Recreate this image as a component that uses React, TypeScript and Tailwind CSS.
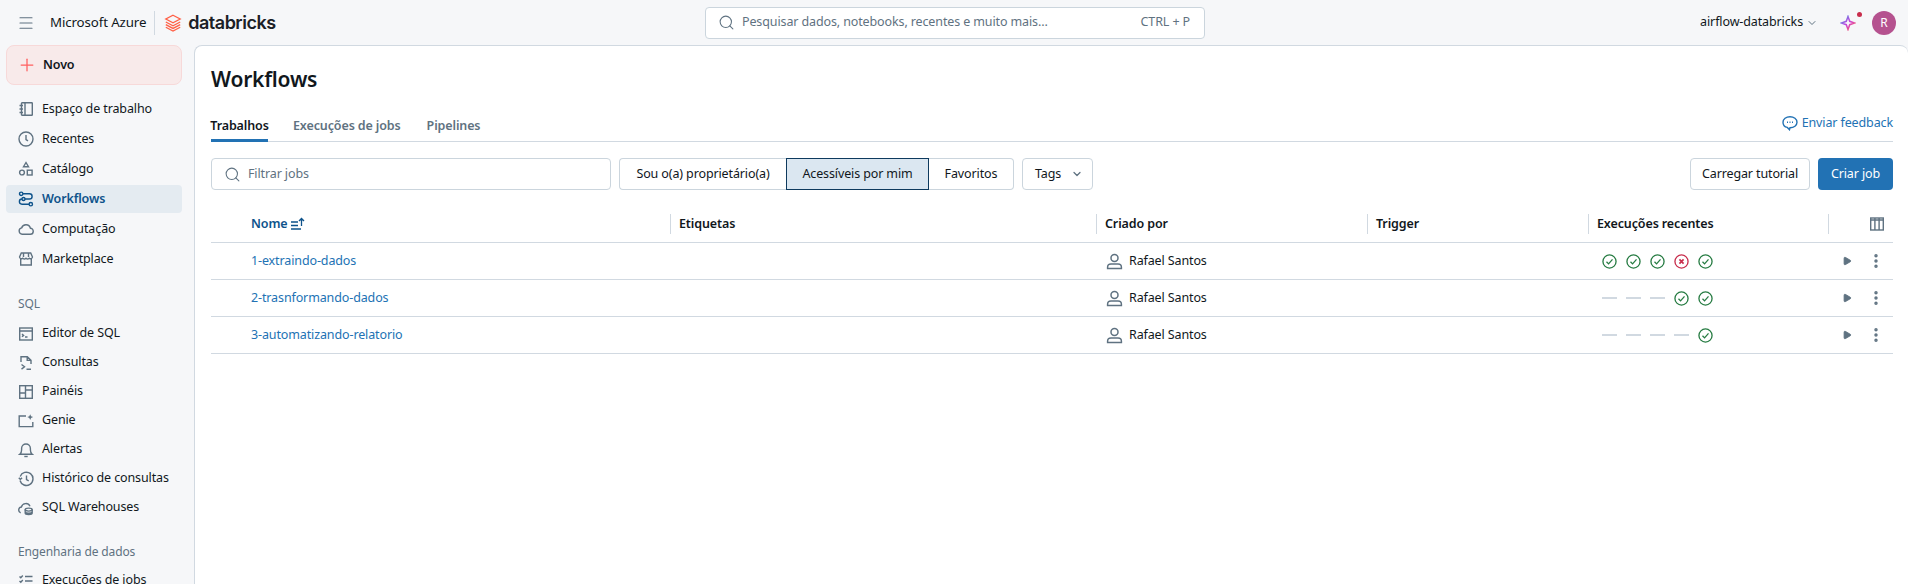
import { Search, ChevronDown, Plus, Menu, Play, EllipsisVertical } from 'lucide-react';
import type { ReactNode } from 'react';

const stroke = { fill: 'none', stroke: 'currentColor', strokeWidth: 1.4 };

function Ico({ children, className = '' }: { children: ReactNode; className?: string }) {
  return (
    <svg viewBox="0 0 16 16" className={`w-4 h-4 shrink-0 ${className}`} {...stroke}>
      {children}
    </svg>
  );
}

const WorkspaceIcon = () => (
  <Ico>
    <rect x="3.5" y="1.7" width="10.800" height="12.600" rx="0.600" />
    <path d="M7 2v12M1.500 4.500h3.500M1.500 8h3.500M1.500 11.500h3.500" />
  </Ico>
);
const ClockIcon = () => (
  <Ico>
    <circle cx="8" cy="8" r="7" />
    <path d="M8 4v4.500l2 1.300" />
  </Ico>
);
const CatalogIcon = () => (
  <Ico>
    <path d="M8 1.500l2.500 4.200h-5z" />
    <circle cx="4" cy="11.500" r="2.400" />
    <rect x="9.300" y="9.200" width="4.800" height="4.800" />
  </Ico>
);
const WorkflowIcon = () => (
  <Ico>
    <circle cx="3.200" cy="2.800" r="1.700" />
    <circle cx="12.800" cy="13.200" r="1.700" />
    <circle cx="5.500" cy="8" r="1.500" />
    <path d="M5 2.800h6.500a2.600 2.600 0 0 1 0 5.200H7M4 8a2.600 2.600 0 0 0 0 5.200h7" />
  </Ico>
);
const CloudIcon = () => (
  <Ico>
    <path d="M4.200 13.200a3.200 3.200 0 0 1-.6-6.300 4.600 4.600 0 0 1 8.800.3 3 3 0 0 1-.3 6z" />
  </Ico>
);
const MarketIcon = () => (
  <Ico>
    <path d="M3.300 2h9.400l1.800 4a2 2 0 0 1-3.300 1.200 2.400 2.400 0 0 1-3.200 0 2.400 2.400 0 0 1-3.200 0A2 2 0 0 1 1.500 6z" />
    <path d="M2.700 8v6h10.600V8M5.500 2v4M10.500 2v4" />
  </Ico>
);
const EditorIcon = () => (
  <Ico>
    <rect x="1.700" y="2" width="12.600" height="12" />
    <path d="M1.700 5h12.600M4 8l1.600 1.400L4 10.800M7 11h2.500" />
  </Ico>
);
const QueryIcon = () => (
  <Ico>
    <path d="M3 7V1.700h6.300L13 5.400V9M9.200 1.700v3.700H13" />
    <path d="M3.500 9.500l3 2.300-3 2.300M8.500 14.300h4.500" />
  </Ico>
);
const PanelsIcon = () => (
  <Ico>
    <rect x="1.700" y="1.700" width="12.600" height="12.600" />
    <path d="M7.500 1.700v12.600M1.700 9h5.800M7.500 6h6.800" />
  </Ico>
);
const GenieIcon = () => (
  <Ico>
    <path d="M8 3H1.200v10.600h13.600V9" />
    <path d="M12.200 1.200l.9 2 2 .9-2 .9-.9 2-.9-2-2-.9 2-.9z" fill="currentColor" stroke="none" />
  </Ico>
);
const BellIcon = () => (
  <Ico>
    <path d="M1.800 12.200c1.300-1 1.800-2.200 1.800-4.200V6.400a4.400 4.400 0 0 1 8.800 0V8c0 2 .5 3.200 1.800 4.200z" />
    <path d="M6.300 14.500h3.400" />
  </Ico>
);
const HistoryIcon = () => (
  <Ico>
    <path d="M2.200 5.500A6.600 6.600 0 1 1 2 9.500" />
    <path d="M.8 6.700l1.500 1.700 1.800-1.500M8.500 4.500v4l2.200 1.300" />
  </Ico>
);
const WarehouseIcon = () => (
  <Ico>
    <path d="M2.700 12.800A3 3 0 0 1 3.400 7a4.600 4.600 0 0 1 8.600-.8" />
    <ellipse cx="10.700" cy="9.600" rx="3.500" ry="1.500" />
    <path d="M7.200 9.600v3.400c0 .8 1.600 1.500 3.500 1.500s3.500-.7 3.500-1.500V9.600M7.200 11.800c0 .8 1.600 1.400 3.500 1.400s3.500-.6 3.500-1.400" />
  </Ico>
);
const JobRunsIcon = () => (
  <Ico>
    <path d="M7 3.500h7.500M7 8h7.500M7 12.500h7.500M1.500 3.500l1.300 1.300 2-2.300M1.500 8l1.300 1.300 2-2.300" />
  </Ico>
);

function DatabricksMark() {
  return (
    <svg viewBox="0 0 18 18" className="w-[18px] h-[18px] shrink-0" fill="none" stroke="#ff5f46" strokeWidth="1.300">
      <path d="M9 1.200l7.200 3.800L9 8.800 1.800 5z" />
      <path d="M1.800 8l7.200 3.800L16.200 8" />
      <path d="M1.800 10.600l7.200 3.800 7.200-3.800" />
      <path d="M1.800 13.200L9 17l7.200-3.800" />
    </svg>
  );
}

function NavItem({ icon, label, active, tight }: { icon: ReactNode; label: string; active?: boolean; tight?: boolean }) {
  return (
    <div
      className={`flex items-center gap-2 pl-3 ${tight ? 'h-[29px]' : 'h-[28px] mb-[2px]'} rounded ${
        active ? 'bg-[#e4ebf1] text-[#0e538b] font-semibold' : 'text-[#11171c]'
      }`}
    >
      <span className={active ? 'text-[#0e538b]' : 'text-[#5f7281]'}>{icon}</span>
      <span>{label}</span>
    </div>
  );
}

function Sidebar() {
  return (
    <aside className="w-[194px] shrink-0 pl-[6px] pr-3">
      <div className="flex items-center gap-2 h-[40px] pl-[11px] rounded-lg bg-[#f8eaea] border border-[#f7d9d9] font-semibold text-[#11171c]">
        <Plus className="w-[20px] h-[20px] -ml-[1px] -mr-[2px] text-[#ff5f5f]" strokeWidth={1.5} />
        <span>Novo</span>
      </div>
      <nav className="mt-[10px]">
        <NavItem icon={<WorkspaceIcon />} label="Espaço de trabalho" />
        <NavItem icon={<ClockIcon />} label="Recentes" />
        <NavItem icon={<CatalogIcon />} label="Catálogo" />
        <NavItem icon={<WorkflowIcon />} label="Workflows" active />
        <NavItem icon={<CloudIcon />} label="Computação" />
        <NavItem icon={<MarketIcon />} label="Marketplace" />
      </nav>
      <div className="mt-[21px] h-[20px] pl-3 leading-[20px] text-xs text-[#5f7281]">SQL</div>
      <nav className="mt-[5px]">
        <NavItem tight icon={<EditorIcon />} label="Editor de SQL" />
        <NavItem tight icon={<QueryIcon />} label="Consultas" />
        <NavItem tight icon={<PanelsIcon />} label="Painéis" />
        <NavItem tight icon={<GenieIcon />} label="Genie" />
        <NavItem tight icon={<BellIcon />} label="Alertas" />
        <NavItem tight icon={<HistoryIcon />} label="Histórico de consultas" />
        <NavItem tight icon={<WarehouseIcon />} label="SQL Warehouses" />
      </nav>
      <div className="mt-[20px] h-[20px] pl-3 leading-[20px] text-xs text-[#5f7281]">Engenharia de dados</div>
      <div className="mt-[4px]">
        <NavItem tight icon={<JobRunsIcon />} label="Execuções de jobs" />
      </div>
    </aside>
  );
}

function TopBar() {
  return (
    <header className="h-[45px] flex items-center">
      <div className="flex items-center w-[705px] shrink-0 pl-[17px]">
        <Menu className="w-[18px] h-[18px] text-[#5f7281]" strokeWidth={1.5} />
        <span className="ml-[15px] text-[13.300px] text-[#11171c]">Microsoft Azure</span>
        <span className="ml-[8px] h-6 w-px bg-[#d1d9e1]" />
        <span className="ml-[9px]"><DatabricksMark /></span>
        <span className="ml-[6px] text-[18px] font-semibold tracking-[-0.5px] text-[#1b2026] font-['Inter',sans-serif]">databricks</span>
      </div>
      <div className="flex items-center w-[500px] h-[32px] bg-white border border-[#cbd5dd] rounded pl-3 pr-3 text-[#5f7281]">
        <Search className="w-[17px] h-[17px] shrink-0" strokeWidth={1.500} />
        <span className="ml-[7px] flex-1">Pesquisar dados, notebooks, recentes e muito mais...</span>
        <span className="mr-[2px]">CTRL + P</span>
      </div>
      <div className="flex-1 flex items-center justify-end pr-3">
        <span className="text-[#11171c]">airflow-databricks</span>
        <ChevronDown className="w-[12px] h-[12px] ml-[3px] text-[#5f7281]" />
        <span className="ml-[22px] mr-[10px] flex items-start">
          <svg viewBox="0 0 16 16" className="w-4 h-4" fill="none" strokeWidth="1.500">
            <defs>
              <linearGradient id="spark" x1="0" y1="0" x2="1" y2="1">
                <stop offset="0" stopColor="#4299e0" />
                <stop offset="0.500" stopColor="#ca42e0" />
                <stop offset="1" stopColor="#ff5f46" />
              </linearGradient>
            </defs>
            <path d="M8 1.500l1.700 4.800L14.500 8l-4.800 1.700L8 14.500l-1.700-4.800L1.500 8l4.800-1.700z" stroke="url(#spark)" />
          </svg>
          <span className="w-[5px] h-[5px] rounded-full bg-[#c82d4c] -mt-[3px] ml-[1px]" />
        </span>
        <span className="w-6 h-6 rounded-full bg-[#b5528f] text-white text-xs flex items-center justify-center">R</span>
      </div>
    </header>
  );
}

function Check() {
  return (
    <svg viewBox="0 0 16 16" className="w-[15px] h-[15px] text-[#277c43]" {...stroke}>
      <circle cx="8" cy="8" r="7" />
      <path d="M4.800 8.300l2.200 2.200 4.200-4.700" />
    </svg>
  );
}

function Fail() {
  return (
    <svg viewBox="0 0 16 16" className="w-[15px] h-[15px] text-[#c82d4c]" {...stroke}>
      <circle cx="8" cy="8" r="7" />
      <path d="M5.800 5.800l4.400 4.400M10.200 5.800l-4.400 4.400" strokeWidth="1.800" />
    </svg>
  );
}

function Dash() {
  return <span className="w-[15px] h-[2px] bg-[#d1d9e1]" />;
}

function PersonIcon() {
  return (
    <svg viewBox="0 0 16 16" className="w-[17px] h-[17px] text-[#5f7281]" {...stroke}>
      <circle cx="8" cy="4.800" r="3.300" />
      <path d="M1.500 14.500v-1.200c0-1.900 1.500-3 3.200-3h6.600c1.700 0 3.200 1.100 3.200 3v1.200z" />
    </svg>
  );
}

type Run = 'ok' | 'fail' | 'none';

const jobs: { name: string; runs: Run[] }[] = [
  { name: '1-extraindo-dados', runs: ['ok', 'ok', 'ok', 'fail', 'ok'] },
  { name: '2-trasnformando-dados', runs: ['none', 'none', 'none', 'ok', 'ok'] },
  { name: '3-automatizando-relatorio', runs: ['none', 'none', 'none', 'none', 'ok'] },
];

const gridCols = 'grid grid-cols-[459px_426px_271px_221px_240px_1fr]';

function HeadCell({ children }: { children: ReactNode }) {
  return (
    <div className="flex items-center h-[20px] pl-[8px] border-l border-[#d1d9e1] font-semibold text-[#11171c]">
      {children}
    </div>
  );
}

function JobsTable() {
  return (
    <div className="mt-[8px]">
      <div className={`${gridCols} h-[45px] pt-[16px] border-b border-[#d1d9e1]`}>
        <div className="flex items-center h-[20px] pl-[40px] font-semibold text-[#0e538b]">
          Nome
          <svg viewBox="0 0 16 16" className="w-4 h-4 ml-[3px]" fill="none" stroke="currentColor" strokeWidth="1.300">
            <path d="M1 6h7M1 9.500h7M1 13h10M11.500 10V3M9 5l2.500-2.500L14 5" />
          </svg>
        </div>
        <HeadCell>Etiquetas</HeadCell>
        <HeadCell>Criado por</HeadCell>
        <HeadCell>Trigger</HeadCell>
        <HeadCell>Execuções recentes</HeadCell>
        <div className="flex items-center h-[20px] border-l border-[#d1d9e1] justify-end pr-[8px] text-[#5f7281]">
          <svg viewBox="0 0 16 16" className="w-4 h-4" {...stroke}>
            <rect x="1.700" y="2" width="12.600" height="12" />
            <path d="M1.700 4h12.600M5.900 2v12M10.100 2v12" />
          </svg>
        </div>
      </div>
      {jobs.map(job => (
        <div key={job.name} className={`${gridCols} h-[37px] items-center border-b border-[#d1d9e1]`}>
          <div className="pl-[40px] pt-[1px] text-[#2272b4]">{job.name}</div>
          <div />
          <div className="flex items-center pl-[10px] text-[#11171c]">
            <PersonIcon />
            <span className="ml-[6px] pt-[1px]">Rafael Santos</span>
          </div>
          <div />
          <div className="flex items-center gap-[9px] pl-[14px]">
            {job.runs.map((r, i) =>
              r === 'ok' ? <Check key={i} /> : r === 'fail' ? <Fail key={i} /> : <Dash key={i} />
            )}
          </div>
          <div className="flex items-center text-[#5f7281]">
            <Play className="w-[10px] h-[10px] ml-[14px] fill-current" />
            <EllipsisVertical className="w-[18px] h-[18px] ml-[15px]" strokeWidth={2.600} />
          </div>
        </div>
      ))}
    </div>
  );
}

function Button({ children, className = '' }: { children: ReactNode; className?: string }) {
  return (
    <div className={`flex items-center h-[32px] bg-white border border-[#cbd5dd] rounded text-[#11171c] ${className}`}>
      {children}
    </div>
  );
}

function Panel() {
  return (
    <main className="flex-1 bg-white border-l border-t border-[#d1d9e1] rounded-tl-lg rounded-tr-lg pl-4 pr-[15px] pt-[19px]">
      <h1 className="text-[21px] leading-[28px] font-semibold tracking-[-0.2px] text-[#11171c]">Workflows</h1>
      <div className="mt-[17px] flex items-stretch h-[32px] border-b border-[#d1d9e1]">
        <div className="h-[32px] w-[57px] flex items-center justify-center pt-[3px] border-b-[3px] border-[#2272b4] font-semibold text-[#11171c]">Trabalhos</div>
        <div className="ml-[25px] h-[32px] flex items-center pt-[3px] pb-[3px] font-semibold text-[#5f7281]">Execuções de jobs</div>
        <div className="ml-[26px] h-[32px] flex items-center pt-[3px] pb-[3px] font-semibold text-[#5f7281]">Pipelines</div>
        <div className="ml-auto h-[26px] flex items-center text-[#2272b4]">
          <svg viewBox="0 0 16 16" className="w-4 h-4 mr-[4px]" {...stroke}>
            <path d="M8 1.700c3.900 0 7 2.400 7 5.600s-3.100 5.400-7 5.400l-.5 2-2.200-2.300C2.800 12 1 10 1 7.300c0-3.200 3.100-5.600 7-5.600z" />
            <path d="M5 7.300h1M7.500 7.300h1M10 7.300h1" />
          </svg>
          Enviar feedback
        </div>
      </div>
      <div className="mt-4 flex items-center">
        <Button className="w-[400px] pl-3 text-[#5f7281]">
          <Search className="w-[17px] h-[17px] text-[#5f7281]" strokeWidth={1.500} />
          <span className="ml-[7px] pt-[1px] text-[#5f7281]">Filtrar jobs</span>
        </Button>
        <div className="ml-2 flex h-[32px]">
          <div className="w-[167px] flex items-center justify-center bg-white border border-r-0 border-[#cbd5dd] rounded-l text-[#11171c]">Sou o(a) proprietário(a)</div>
          <div className="w-[143px] flex items-center justify-center bg-[#dbe7f1] border border-[#0e3a5e] text-[#11171c]">Acessíveis por mim</div>
          <div className="w-[85px] flex items-center justify-center bg-white border border-l-0 border-[#cbd5dd] rounded-r text-[#11171c]">Favoritos</div>
        </div>
        <Button className="ml-2 w-[71px] pl-[12px]">
          Tags
          <ChevronDown className="w-[12px] h-[12px] ml-[10px] text-[#5f7281]" strokeWidth={2.500} />
        </Button>
        <Button className="ml-auto w-[120px] justify-center">Carregar tutorial</Button>
        <div className="ml-2 w-[75px] h-[32px] flex items-center justify-center rounded bg-[#2272b4] text-white">Criar job</div>
      </div>
      <JobsTable />
    </main>
  );
}

export default function App() {
  return (
    <div className="h-[584px] overflow-hidden bg-[#f6f7f9] text-[12.5px] font-['Noto_Sans',sans-serif] tracking-[-0.12px]">
      <TopBar />
      <div className="flex h-[539px]">
        <Sidebar />
        <Panel />
      </div>
    </div>
  );
}
